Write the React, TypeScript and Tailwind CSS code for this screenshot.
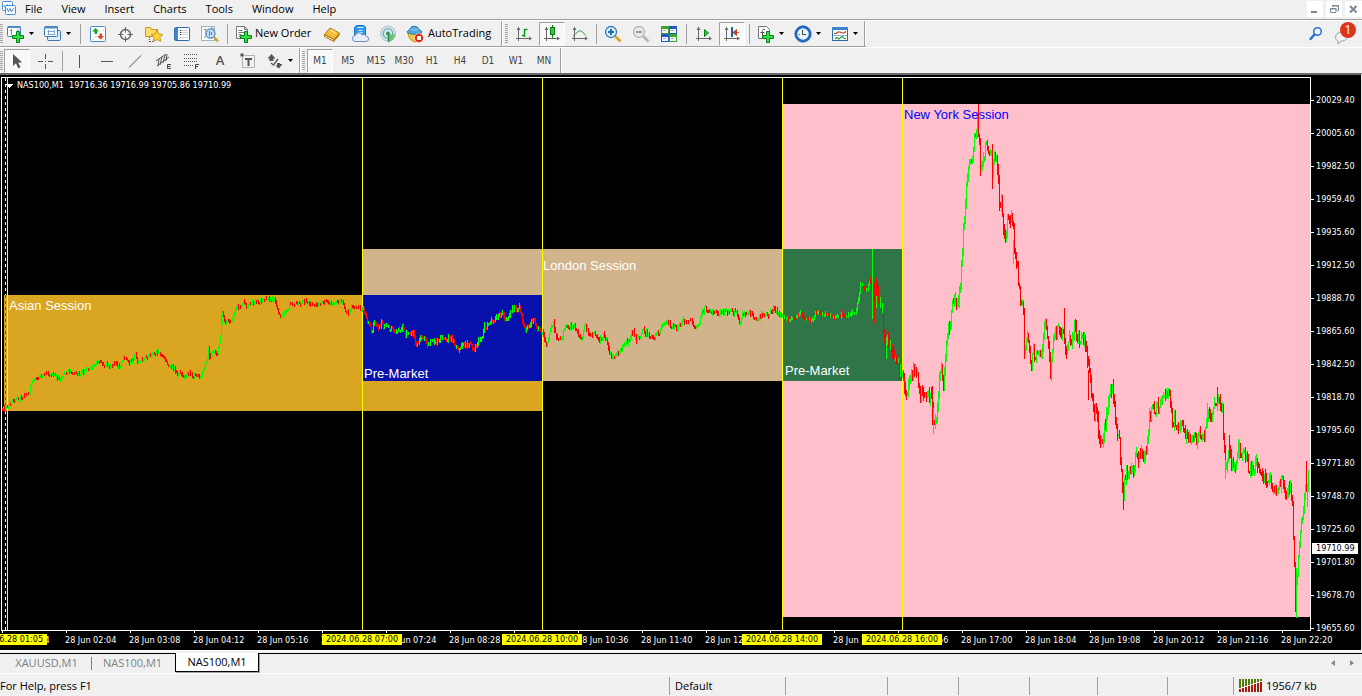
import React from "react";

const ui = "font-['Open_Sans','Noto_Sans',sans-serif]";
const axisFont = "font-['DejaVu_Sans_Condensed','DejaVu_Sans',sans-serif] text-[9px]";

/* ---------- chart data ---------- */

// Trace of the price: x position of the bar and its middle height.
const trace: [number, number][] = [
  [2, 409], [5, 408], [8, 405], [12, 400], [15, 399], [19, 400], [24, 395], [28, 393], [30, 388], [32, 380], [36, 378], [40, 377], [48, 373], [54, 375], [60, 380], [63, 374], [70, 372], [80, 374], [86, 369], [92, 366], [97, 362], [103, 364], [110, 367], [113, 363], [120, 366], [123, 358], [130, 363], [135, 355], [137, 363], [145, 358], [150, 354], [155, 352], [160, 354], [165, 359], [168, 366], [173, 368], [177, 374], [180, 371], [183, 378], [188, 373], [195, 376], [202, 374], [205, 366], [208, 352], [210, 356], [214, 350], [217, 355], [219, 342], [221, 325], [222, 312], [224, 322], [232, 320], [236, 306], [240, 309], [243, 300], [246, 307], [252, 302], [258, 302], [265, 299], [273, 299], [277, 308], [280, 317], [284, 313], [290, 304], [300, 304], [305, 301], [312, 304], [317, 305], [325, 301], [333, 304], [341, 302], [345, 310], [348, 314], [352, 306], [357, 309], [361, 308],
  [363, 309], [366, 317], [371, 331], [374, 322], [377, 328], [381, 324], [386, 327], [392, 328], [396, 332], [402, 327], [405, 335], [410, 333], [413, 333], [416, 345], [421, 337], [427, 343], [434, 342], [440, 338], [447, 340], [450, 337], [455, 345], [459, 349], [464, 345], [470, 344], [473, 350], [478, 341], [481, 339], [484, 326], [488, 325], [491, 319], [494, 321], [498, 314], [501, 314], [503, 317], [508, 317], [510, 310], [515, 309], [519, 308], [522, 320], [525, 330], [529, 325], [533, 320], [537, 330], [541, 332],
  [543, 336], [546, 343], [549, 333], [553, 323], [556, 337], [561, 341], [564, 328], [568, 327], [574, 325], [577, 332], [582, 339], [584, 325], [588, 332], [592, 337], [594, 332], [598, 341], [602, 336], [606, 338], [608, 348], [611, 356], [614, 357], [617, 353], [620, 350], [624, 343], [629, 341], [631, 331], [633, 332], [636, 340], [643, 330], [647, 335], [653, 337], [658, 335], [662, 325], [667, 320], [670, 326], [677, 328], [683, 321], [690, 321], [695, 327], [699, 325], [702, 311], [705, 308], [708, 313], [713, 312], [718, 314], [724, 312], [730, 311], [737, 314], [739, 325], [742, 315], [747, 312], [752, 314], [757, 320], [762, 315], [768, 315], [773, 310], [778, 312], [781, 317],
  [784, 318], [790, 320], [795, 317], [800, 312], [805, 320], [811, 321], [815, 313], [820, 313], [830, 316], [837, 316], [843, 313], [846, 317], [851, 312], [855, 313], [858, 298], [860, 284], [863, 287], [865, 291], [868, 286], [871, 279], [874, 300], [875, 300], [876, 284], [878, 298], [880, 300], [882, 310], [883, 332], [885, 350], [887, 338], [890, 343], [893, 352], [896, 358], [899, 372], [902, 375], [904, 388], [906, 394], [908, 388], [910, 376], [914, 369], [917, 373], [919, 395], [921, 392], [925, 393], [929, 399], [931, 392], [932, 405], [933, 420], [936, 421], [937, 405], [939, 374], [941, 366], [943, 383], [945, 352], [947, 334], [949, 330], [951, 312], [952, 300], [954, 302], [956, 303], [958, 300], [960, 288], [961, 265], [963, 233],
  [965, 200], [966, 185], [968, 165], [970, 163], [972, 155], [974, 140], [976, 131], [977, 122], [979, 142], [980, 163], [982, 160], [984, 158], [985, 148], [987, 144], [989, 150], [990, 153], [991, 150], [992, 175], [994, 160], [996, 153], [997, 165], [999, 201], [1001, 201], [1003, 225], [1004, 240], [1005, 238], [1007, 218], [1009, 218], [1011, 222], [1013, 225], [1014, 248], [1016, 262], [1018, 280], [1020, 305], [1021, 308], [1022, 302], [1023, 318], [1024, 348], [1026, 338], [1028, 340], [1031, 366], [1033, 350], [1036, 356], [1040, 355], [1042, 345], [1045, 322], [1048, 340], [1050, 370], [1051, 360], [1054, 333], [1057, 328], [1061, 337], [1063, 327], [1065, 352], [1068, 342], [1072, 338], [1074, 325], [1077, 336], [1081, 340], [1084, 335], [1086, 350], [1089, 370], [1091, 395], [1093, 412], [1096, 412], [1098, 430], [1100, 445],
  [1103, 435], [1106, 415], [1109, 391], [1112, 388], [1114, 402], [1116, 430], [1119, 442], [1121, 475], [1123, 498], [1124, 482], [1126, 470], [1128, 478], [1131, 464], [1133, 469], [1136, 458], [1139, 458], [1141, 444], [1143, 456], [1146, 452], [1148, 432], [1149, 415], [1152, 410], [1155, 410], [1157, 404], [1160, 406], [1163, 398], [1166, 392], [1168, 395], [1170, 402], [1172, 424], [1174, 417], [1176, 428], [1179, 425], [1182, 425], [1185, 433], [1189, 438], [1193, 438], [1197, 438], [1202, 432], [1205, 433], [1207, 415], [1210, 418], [1213, 410], [1216, 400], [1217, 396], [1219, 400], [1222, 412], [1223, 430], [1225, 470], [1227, 462], [1229, 446], [1231, 463], [1234, 467], [1237, 457], [1239, 447], [1242, 457], [1244, 453], [1247, 465], [1250, 471], [1253, 472], [1256, 463], [1259, 468], [1262, 473], [1265, 480], [1267, 484], [1269, 477], [1271, 485], [1275, 489], [1278, 490], [1281, 480], [1283, 481], [1285, 496], [1287, 490], [1290, 487], [1292, 505], [1293, 535], [1294, 563], [1295, 592], [1297, 575], [1298, 558], [1299, 542], [1301, 525], [1303, 510], [1305, 486], [1307, 488], [1308, 478],
];

// Single bars that reach far beyond their neighbours: x, top, bottom, rising.
const spikes: [number, number, number, boolean][] = [
  [221, 307, 325, true], [209, 346, 360, false], [273, 295, 303, true], [872, 249, 319, true], [873, 255, 302, false], [874, 300, 323, false], [876, 278, 296, false],
  [932, 386, 425, false], [933, 408, 434, true], [978, 104, 135, false], [977, 116, 134, true], [980, 138, 176, false],
  [992, 154, 189, false], [1013, 240, 264, true], [1064, 308, 334, false], [1088, 370, 400, false], [1123, 484, 510, false],
  [1207, 403, 428, true], [1217, 387, 402, false], [1225, 460, 479, true], [1229, 435, 459, false], [1238, 439, 453, true], [1295, 574, 612, false],
  [1296, 568, 618, true], [1306, 461, 492, false], [1307, 483, 507, true], [1308, 470, 492, true],
];

function hash(n: number) {
  const s = Math.sin(n * 127.1 + 11.7) * 43758.5453;
  return s - Math.floor(s);
}

function makeBars() {
  const mid: number[] = [];
  for (let i = 0; i + 1 < trace.length; i++) {
    const [x0, y0] = trace[i];
    const [x1, y1] = trace[i + 1];
    for (let x = x0; x <= x1; x++) mid[x] = y0 + ((y1 - y0) * (x - x0)) / (x1 - x0);
  }
  let up = "";
  let down = "";
  for (let x = 2; x < 1309; x++) {
    const reach = x < 362 ? 4 : x < 783 ? 5 : x < 870 ? 4 : x < 1290 ? 11 : 8;
    const close = mid[x] + (hash(x) - 0.5) * reach;
    const open = mid[x - 1] === undefined ? close : mid[x - 1] + (hash(x - 1) - 0.5) * reach;
    const top = Math.round(Math.min(open, close) - hash(x + 5000) * reach * 0.6);
    const bottom = Math.max(top + 3, Math.round(Math.max(open, close) + hash(x + 9000) * reach * 0.6));
    const piece = `M${x} ${top}h1V${bottom}h-1z`;
    if (close < open) up += piece;
    else down += piece;
  }
  return { up, down };
}
const bars = makeBars();

const prices = ["20029.40", "20005.60", "19982.50", "19959.40", "19935.60", "19912.50", "19888.70", "19865.60", "19842.50", "19818.70", "19795.60", "19771.80", "19748.70", "19725.60", "19701.80", "19678.70", "19655.60"];
const times = ["28 Jun 2024", "28 Jun 02:04", "28 Jun 03:08", "28 Jun 04:12", "28 Jun 05:16", "28 Jun 06:20", "28 Jun 07:24", "28 Jun 08:28", "28 Jun 09:32", "28 Jun 10:36", "28 Jun 11:40", "28 Jun 12:44", "28 Jun 13:48", "28 Jun 14:52", "28 Jun 15:56", "28 Jun 17:00", "28 Jun 18:04", "28 Jun 19:08", "28 Jun 20:12", "28 Jun 21:16", "28 Jun 22:20"];
const marks: [number, string][] = [[7, "2024.06.28 01:05"], [362, "2024.06.28 07:00"], [542, "2024.06.28 10:00"], [782, "2024.06.28 14:00"], [902, "2024.06.28 16:00"]];

/* ---------- icons ---------- */

function Svg({ children, w = 18, h = 18 }: { children: React.ReactNode; w?: number; h?: number }) {
  return (
    <svg width={w} height={h} viewBox={`0 0 ${w} ${h}`} fill="none" aria-hidden="true" className="block shrink-0">
      {children}
    </svg>
  );
}
const Plus = () => <path d="M9.500 6.500h3v4h4v3h-4v4h-3v-4h-4v-3h4z" fill="#2fe048" stroke="#08801a" />;
const Arrow = () => <svg width="5" height="3" viewBox="0 0 5 3" aria-hidden="true" className="block shrink-0"><path d="M0 0h5L2.500 3z" fill="#000" /></svg>;

const NewChart = () => <Svg><rect x=".5" y="1.500" width="13" height="10" rx="1" fill="#fff" stroke="#4682b4" /><path d="M1 2h12.500" stroke="#4a8bc8" strokeWidth="2" /><path d="M4.500 4v6M3 5.500h2M11 4v4" stroke="#5b93c4" /><Plus /></Svg>;
const Profiles = () => <Svg><rect x="3.500" y="5.500" width="13" height="10" rx="1" fill="#dcecf8" stroke="#3d78b4" /><rect x=".5" y="1.500" width="13" height="10" rx="1" fill="#fff" stroke="#3d78b4" /><path d="M1 2.500h13" stroke="#4a8bc8" strokeWidth="2" /><path d="M3.500 6.500h7M3.500 9.500h7M4.500 5v5M10.500 5v5" stroke="#79a6d0" /></Svg>;
const Market = () => <Svg><rect x="1.500" y="1.500" width="15" height="15" rx="1" fill="#fff" stroke="#4a8bc8" /><path d="M4 14h1M6 12h1M12 13h1M14 5h1" stroke="#9bb" /><path d="M6.500 3l3.500 3.500H8V9H5.500V6.500H3z" fill="#16a32c" /><path d="M11.500 14.500L15 11h-2V8.500h-2.500V11H8z" fill="#e0481c" /></Svg>;
const Crosshair = () => <Svg><circle cx="8.500" cy="9.500" r="5" stroke="#666" strokeWidth="1.500" /><path d="M8.500 2v5.500M8.500 11.500V17M1 9.500h5.500M10.500 9.500H16" stroke="#666" /></Svg>;
const Navigator = () => <Svg><path d="M.5 2.500h5l1 2h6v7H.5z" fill="#fbdc6c" stroke="#c99a22" /><path d="M4.500 12v5M5 16.500h3" stroke="#555" strokeDasharray="1 1" /><path d="M12 5l1.900 3.900 4 .6-2.900 2.900.7 4.100L12 14.600 8.300 16.500l.7-4.100L6 9.500l4-.6z" fill="#fdd33c" stroke="#b8860b" strokeWidth=".8" /></Svg>;
const DataWin = () => <Svg><rect x="1.500" y="2.500" width="15" height="13" rx="1" fill="#fff" stroke="#2c6cb0" /><rect x="2" y="3" width="3" height="12" fill="#3f86cc" /><path d="M7 5.500h8M7 7.500h8M7 9.500h8M7 12.500h8" stroke="#c5d5e6" /><path d="M7 5.500h1M7 7.500h1M7 9.500h1" stroke="#111" /></Svg>;
const Tester = () => <Svg><rect x=".5" y="1.500" width="13" height="14" fill="#f8fafc" stroke="#a0b4c8" /><path d="M3 4.500h2v6M10 3h2v4M4 13v-2" stroke="#9a8c60" /><circle cx="9.500" cy="8.500" r="4.500" fill="#b7dcf8" fillOpacity=".85" stroke="#5d93c8" strokeWidth="1.300" /><path d="M8.500 6v5M10.500 7v3" stroke="#4a7fae" /><path d="M13 12l4 4.500" stroke="#d9a326" strokeWidth="2.500" /></Svg>;
const OrderIcon = () => <Svg><path d="M1.500 1.500h8l3 3v9h-11z" fill="#fff" stroke="#777" /><path d="M9.500 1v3.500h3" stroke="#777" /><path d="M3.500 5.500h4M3.500 7.500h6M3.500 9.500h3M3.500 11.500h2" stroke="#777" /><Plus /></Svg>;
const Book = () => <Svg><path d="M1.500 9.500L7 3l9.500 5L11 14.500z" fill="#f3bd3c" stroke="#b37c0d" /><path d="M1.500 9.500v2L11 16.500v-2z" fill="#fff0bd" stroke="#a56e08" /><path d="M11 14.500L16.500 8v2.500L11 16.500z" fill="#b9780c" /><path d="M7.500 5l5 2.600" stroke="#fde69a" strokeWidth="1.500" /></Svg>;
const Cloud = () => <Svg><path d="M3.500 2.500l2-2h7l2 1.500V10h-11z" fill="#2f9bea" stroke="#1876c2" /><path d="M6.500 2.500h6M7.500 5.500h4M7.500 7.500h4" stroke="#d5eeff" /><path d="M4.500 16.500a3 3 0 01-.2-6 3.700 3.700 0 016.700-1 3.400 3.400 0 014 1.800 2.600 2.600 0 010 5.200z" fill="#e7eef8" stroke="#6c8cb8" /></Svg>;
const Signal = () => <Svg><circle cx="9" cy="8.500" r="7.500" fill="#d9e9e6" stroke="#a9c4cc" /><circle cx="9" cy="8.500" r="4.800" stroke="#6fa6cf" strokeWidth="1.300" /><path d="M9.500 9v8c4-.7 6.500-3.500 7-7.500" fill="#58b24c" fillOpacity=".65" /><circle cx="9" cy="8.500" r="2" fill="#2e9a5c" /><path d="M9.500 10v7" stroke="#24903a" strokeWidth="1.500" /></Svg>;
const Auto = () => <Svg><path d="M2 8h13c0 4-2.500 8-6 9C5 16 2 12 2 8z" fill="#f3c83c" stroke="#b98c18" /><path d="M1 7c1-2 3-2 3.500-4C5.500.7 11.500.7 12 3c.5 2 3 2 4 4-3 3-12 3-15 0z" fill="#52a9dc" stroke="#2474a8" /><path d="M5 4c2 1.400 5 1.400 7 0" stroke="#9bd6f5" /><circle cx="13" cy="13" r="4.500" fill="#dc2418" stroke="#fff" strokeWidth=".6" /><rect x="11" y="11" width="4" height="4" fill="#fff" /></Svg>;
const Axes = () => (
  <>
    <path d="M3.500 2v14M1 13.500h14" stroke="#666" />
    <path d="M1.500 5L3.500 2l2 3zM14 11.500l3 2-3 2z" fill="#666" />
  </>
);
const BarChart = () => <Svg><Axes /><path d="M9.500 4v8M9.500 4.500h3M7 10.500h3" stroke="#0a9a20" strokeWidth="1.500" /></Svg>;
const Candle = () => <Svg><Axes /><path d="M9.500 0v13" stroke="#087a18" /><rect x="7.500" y="2.500" width="4" height="7" fill="#2cd044" stroke="#087a18" /></Svg>;
const LineChart = () => <Svg><Axes /><path d="M2 11.500C6 7 9 4.500 11 6.500l4 4" stroke="#279a3a" /></Svg>;
const Zoom = ({ minus = false }: { minus?: boolean }) => (
  <Svg>
    <path d="M11 11l5.500 5.500" stroke={minus ? "#b5b5b5" : "#d9a92c"} strokeWidth="2.800" />
    <circle cx="7" cy="7" r="5.500" fill={minus ? "#e9e9e9" : "#d8f0fd"} stroke={minus ? "#b4b4b4" : "#2f7cc0"} strokeWidth="1.300" />
    <path d={minus ? "M4 7h6" : "M4 7h6M7 4v6"} stroke={minus ? "#999" : "#1f6db4"} strokeWidth="2" />
  </Svg>
);
const Tiles = () => <Svg><rect x="1" y="1" width="8" height="8" fill="#3ca52c" /><rect x="9" y="1" width="8" height="8" fill="#2259c0" /><rect x="1" y="9" width="8" height="8" fill="#2259c0" /><rect x="9" y="9" width="8" height="8" fill="#3ca52c" /><path d="M2 4h6v4H2zM10 4h6v4h-6zM2 12h6v4H2zM10 12h6v4h-6z" fill="#f2f7fb" /><path d="M3 5.500h3M11 5.500h3M3 13.500h3M11 13.500h3" stroke="#aac" /></Svg>;
const Scroll = () => <Svg><Axes /><path d="M9.500 4.500l4 3.500-4 3.500z" fill="#35c84c" stroke="#08801a" /></Svg>;
const Shift = () => <Svg><Axes /><path d="M9 2v10" stroke="#1b5fa8" strokeWidth="2" /><path d="M16 7.500h-3M13.500 4.500v6l-3.500-3z" fill="#d0421a" stroke="#b83410" strokeWidth=".8" /></Svg>;
const Indicators = () => <Svg><path d="M1.500 1.500h8l3 3v9h-11z" fill="#fff" stroke="#777" /><path d="M8 4.500c-2-1-2.500.5-2.500 2v5M3.500 7.500h4" stroke="#555" /><Plus /></Svg>;
const Clock = () => <Svg><circle cx="9" cy="9" r="7" fill="#e9f3fb" stroke="#1e6cc4" strokeWidth="2.500" /><circle cx="9" cy="9" r="8.200" stroke="#0f4f9c" strokeWidth=".6" /><path d="M8.500 5v4.500H12M5 9.500h1" stroke="#444" /></Svg>;
const Template = () => <Svg><rect x="1.500" y="2.500" width="15" height="13" fill="#fff" stroke="#2f6ca8" /><path d="M1 3.500h16" stroke="#3a84cc" strokeWidth="3" /><path d="M2 10.500h14" stroke="#8fb0d0" /><path d="M3 8.500h2l2-1.500h2l2 1h2l2-1.500" stroke="#b03818" strokeWidth="1.200" /><path d="M4 14l2-1.500 2 1.500 3-2.500L13 13l2 1" stroke="#269a38" strokeWidth="1.200" /></Svg>;

const Pointer = () => <Svg><path d="M5 2v12l3-2.700 2.200 5 2.300-1-2.300-4.800h4z" fill="#555" /></Svg>;
const Cross = () => <Svg><path d="M9.500 2v5M9.500 12v5M2 9.500h5M12 9.500h5M9 9.500h1" stroke="#555" /></Svg>;
const VLine = () => <Svg><path d="M8.500 3v13" stroke="#555" /></Svg>;
const HLine = () => <Svg><path d="M2 9.500h12" stroke="#555" /></Svg>;
const Trend = () => <Svg><path d="M2 15.500L14 3.500" stroke="#555" /></Svg>;
const Equi = () => <Svg><path d="M1 9L11 2M2 14L14 5M4 7l-1 7M7 5L5 13M10 3L8 11M12 2l-1 7" stroke="#555" /><path d="M16 12.500h-3.500v4H16M12.500 14.500h3" stroke="#444" /></Svg>;
const Fibo = () => <Svg><path d="M1 2.500h14M1 6.500h14M1 9.500h14M1 13.500h9" stroke="#555" strokeDasharray="1 1" /><path d="M16 12.500h-3.500V17M12.500 14.500H15" stroke="#444" /></Svg>;
const LabelTool = () => <Svg><path d="M3.500 3.500h12v12h-12z" stroke="#777" strokeDasharray="1 1" /><path d="M1.500 1.500h3v3h-3z" fill="#555" /><path d="M6 7h7M9.500 6.500V14" stroke="#555" strokeWidth="2" /></Svg>;
const Arrows = () => <Svg><path d="M1.500 6.500l4-4.500 4 4.500H7.500V9h-4V6.500zM16.500 12l-3.500 4.500L9 13.500h2V11h3v1z" fill="#555" /><path d="M5 11l2.500 2L12 7" stroke="#555" strokeWidth="1.300" /></Svg>;

/* ---------- toolbar parts ---------- */

function Tool({ label, children, pressed = false }: { label: string; children: React.ReactNode; pressed?: boolean }) {
  return (
    <button
      type="button"
      aria-label={label}
      aria-pressed={pressed || undefined}
      className={pressed ? "mx-px flex h-6 w-[26px] shrink-0 items-center justify-center border border-t-[#a0a0a0] border-r-white border-b-white border-l-[#a0a0a0] bg-[#f8f8f8]" : "flex h-6 w-7 shrink-0 items-center justify-center"}
    >
      {children}
    </button>
  );
}
const DropTool = ({ label, children }: { label: string; children: React.ReactNode }) => (
  <button type="button" aria-label={label} className="flex h-6 w-[37px] shrink-0 items-center gap-1 pl-1">{children}<Arrow /></button>
);
const Sep = ({ className = "mx-[3px]" }: { className?: string }) => <span className={`${className} h-5 w-px shrink-0 bg-[#a0a0a0]`} />;
const Grip = ({ className = "" }: { className?: string }) => <span className={`${className} h-5 w-[3px] shrink-0 bg-[repeating-linear-gradient(#a5a5a5_0_1px,#f0f0f0_1px_2px)]`} />;
const End = () => <span className="h-full w-0.5 shrink-0 border-l border-[#a0a0a0] bg-white" />;

const frames = ["M1", "M5", "M15", "M30", "H1", "H4", "D1", "W1", "MN"];

/* ---------- page parts ---------- */

function MenuBar() {
  return (
    <header className="flex h-5 items-start border-b border-[#a0a0a0]">
      <Svg w={18} h={17}>
        <rect x="2.500" y="1.500" width="10" height="9" rx="1" fill="#fff" stroke="#3d8ee0" />
        <path d="M4 5l1.500 3L7 4.500 8.500 7" stroke="#3d8ee0" />
        <rect x="5.500" y="5.500" width="10" height="9" rx="1" fill="#fff" stroke="#3d8ee0" />
        <path d="M7 8l1.500 4L10 8.500l1.500 3.500 2-4" stroke="#3d8ee0" />
      </Svg>
      <nav className="flex flex-1 gap-[19px] pl-[7px] text-[11px] leading-[18px] text-black">
        {["File", "View", "Insert", "Charts", "Tools", "Window", "Help"].map((m) => <button type="button" key={m}>{m}</button>)}
      </nav>
      <div className="flex gap-[3px] pt-px">
        <button type="button" aria-label="Minimize" className="bg-white"><Svg w={16} h={16}><path d="M4 11h6" stroke="#7a8794" strokeWidth="2" /></Svg></button>
        <button type="button" aria-label="Restore" className="bg-white"><Svg w={16} h={16}><path d="M6.500 6V4.500h6v5H11M6 5h7M4 8h6.500M4.500 7.500h5.500v4H4.500z" stroke="#7a8794" /></Svg></button>
        <button type="button" aria-label="Close" className="bg-white"><Svg w={17} h={16}><path d="M5 5l6.500 6.500M11.500 5L5 11.500" stroke="#7a8794" strokeWidth="2" /></Svg></button>
      </div>
    </header>
  );
}

function MainToolbar() {
  return (
    <div className="flex h-[27px] items-center border-t border-white">
      <div className="flex h-full items-center border-b border-[#a0a0a0]">
        <Grip />
        <DropTool label="New chart"><NewChart /></DropTool>
        <DropTool label="Profiles"><Profiles /></DropTool>
        <Sep />
        <Tool label="Market Watch"><Market /></Tool>
        <Tool label="Data Window"><Crosshair /></Tool>
        <Tool label="Navigator"><Navigator /></Tool>
        <Tool label="Terminal"><DataWin /></Tool>
        <Tool label="Strategy Tester"><Tester /></Tool>
        <Sep />
        <button type="button" className="flex h-6 w-[87px] items-center gap-0.5 pl-1 text-[11px] whitespace-nowrap"><OrderIcon /><span>New Order</span></button>
        <Tool label="MetaEditor"><Book /></Tool>
        <Tool label="Cloud"><Cloud /></Tool>
        <Tool label="Signals"><Signal /></Tool>
        <button type="button" className="flex h-6 w-[99px] items-center gap-1 pl-1 text-[11px] whitespace-nowrap"><Auto /><span>AutoTrading</span></button>
        <End />
        <Grip className="mx-0.5" />
        <Tool label="Bar chart"><BarChart /></Tool>
        <Tool label="Candlesticks" pressed><Candle /></Tool>
        <Tool label="Line chart"><LineChart /></Tool>
        <Sep className="mx-0.5" />
        <Tool label="Zoom in"><Zoom /></Tool>
        <Tool label="Zoom out"><Zoom minus /></Tool>
        <Tool label="Tile windows"><Tiles /></Tool>
        <Sep />
        <Tool label="Auto scroll"><Scroll /></Tool>
        <Tool label="Chart shift" pressed><Shift /></Tool>
        <Sep />
        <DropTool label="Indicators"><Indicators /></DropTool>
        <DropTool label="Periods"><Clock /></DropTool>
        <DropTool label="Templates"><Template /></DropTool>
        <End />
      </div>
      <div className="flex h-full flex-1 items-center justify-end gap-2.5">
        <button type="button" aria-label="Search"><Svg w={16} h={16}><circle cx="9.500" cy="5.500" r="3.800" fill="#eef6ff" stroke="#2f6fd0" strokeWidth="1.500" /><path d="M6.500 8.500L2.500 13" stroke="#2f6fd0" strokeWidth="2.500" strokeLinecap="round" /></Svg></button>
        <button type="button" aria-label="Messages" className="relative h-6 w-7">
          <svg width="20" height="16" viewBox="0 0 20 16" aria-hidden="true" className="absolute top-[7px] left-0"><path d="M4 12c-3-1-3.500-6 0-8 3-1.500 8-1 9 2 1 4-2 6-6 6l-3 3z" fill="#f2f2f6" stroke="#a0a0a4" /></svg>
          <span className="absolute top-0 left-1.5 flex size-4 items-center justify-center rounded-full bg-[#dd3420] text-[12px] text-white">1</span>
        </button>
      </div>
    </div>
  );
}

function DrawToolbar() {
  return (
    <div className="flex h-[26px] items-center border-t border-white">
      <Grip />
      <Tool label="Cursor" pressed><Pointer /></Tool>
      <Tool label="Crosshair"><Cross /></Tool>
      <Sep />
      <Tool label="Vertical line"><VLine /></Tool>
      <Tool label="Horizontal line"><HLine /></Tool>
      <Tool label="Trendline"><Trend /></Tool>
      <Tool label="Equidistant channel"><Equi /></Tool>
      <Tool label="Fibonacci"><Fibo /></Tool>
      <button type="button" className="h-6 w-7 text-[13px] font-semibold text-[#555]">A</button>
      <Tool label="Text label"><LabelTool /></Tool>
      <DropTool label="Arrows"><Arrows /></DropTool>
      <End />
      <Grip className="mx-px" />
      <div className="flex pr-0.5 font-['DejaVu_Sans_Condensed','DejaVu_Sans',sans-serif] text-[10px] text-[#444]">
        {frames.map((f) => (
          <button
            type="button"
            key={f}
            className={f === "M1"
              ? "mx-px h-6 w-[26px] border border-t-[#a0a0a0] border-r-white border-b-white border-l-[#a0a0a0] bg-[#f8f8f8]"
              : "h-6 w-7"}
          >
            {f}
          </button>
        ))}
      </div>
      <End />
    </div>
  );
}

function Plot() {
  return (
    <div className="relative mt-0.5 ml-px flex-1 overflow-hidden border border-white">
      <svg className="absolute inset-0 size-full" shapeRendering="crispEdges" role="img" aria-label="NAS100 one minute chart">
        <g transform="translate(-2 -78)">
          <rect x="783" y="104" width="530" height="513" fill="#ffc0cb" />
          <rect x="4" y="295" width="539" height="116" fill="#daa520" />
          <rect x="363" y="249" width="420" height="132" fill="#d2b48c" />
          <rect x="363" y="295" width="180" height="86" fill="#0811ab" />
          <rect x="783" y="249" width="120" height="132" fill="#2f7548" />
          <path d="M5.500 78V295M5.500 411V630" stroke="#fff" strokeDasharray="3 3" />
          <path d="M5.500 295V411" stroke="#2558c8" strokeDasharray="3 3" />
          {marks.map(([x]) => <rect key={x} x={x} y="77" width="1" height="554" fill="#ff0" />)}
          <path d={bars.up} fill="#0f0" />
          <path d={bars.down} fill="#f00" />
          {spikes.map(([x, t, b, rise]) => <rect key={`${x}-${t}`} x={x} y={t} width="1" height={b - t} fill={rise ? "#0f0" : "#f00"} />)}
          <path d="M5 84h8l-4 4z" fill="#fff" />
        </g>
      </svg>
      <p className="relative pl-[15px] font-['DejaVu_Sans_Condensed','DejaVu_Sans',sans-serif] text-[9px] leading-[15px] whitespace-pre text-white">NAS100,M1  19716.36 19716.99 19705.86 19710.99</p>
      <div className="font-['Liberation_Sans',Arial,sans-serif] text-[13px] leading-4 text-white">
        <span className="absolute top-[220px] left-[7px]">Asian Session</span>
        <span className="absolute top-[288px] left-[362px]">Pre-Market</span>
        <span className="absolute top-[180px] left-[541px]">London Session</span>
        <span className="absolute top-[285px] left-[783px]">Pre-Market</span>
        <span className="absolute top-[29px] left-[902px] text-[#0000ff]">New York Session</span>
      </div>
    </div>
  );
}

function Chart() {
  return (
    <main className={`flex border-t-2 border-r border-b border-t-[#696969] border-r-[#e3e3e3] border-b-white bg-black text-white ${axisFont}`}>
      <div className="flex min-w-0 flex-1 flex-col">
        <Plot />
        <div className="relative h-[19px] pl-px">
          <div className="flex">
            {times.map((t) => (
              <div key={t} className="w-16 shrink-0 whitespace-nowrap">
                <div className="ml-px h-0.5 w-px bg-white" />
                <div className="leading-[14px]">{t}</div>
              </div>
            ))}
          </div>
          <div className="absolute inset-x-0 top-[3px] h-[11px] [clip-path:inset(0)]">
            {marks.map(([x, t]) => (
              <span key={t} className="absolute top-0 flex h-[11px] w-20 items-center justify-center bg-[#ffff00] leading-[11px] whitespace-nowrap text-black" style={{ left: x - 40 }}>{t}</span>
            ))}
          </div>
        </div>
      </div>
      <div className="relative w-[50px] pt-[9px] pb-[5px]">
        {prices.map((p) => (
          <div key={p} className="flex h-[33px] items-center gap-0.5">
            <span className="h-px w-[3px] bg-white" />
            <span>{p}</span>
          </div>
        ))}
        <span className="absolute top-[468px] left-px flex h-[11px] w-[46px] items-center bg-white pl-1 text-black">19710.99</span>
      </div>
    </main>
  );
}

function ChartTabs() {
  return (
    <div className="mt-0.5 flex h-5 items-start border-t border-black text-[11px] leading-[18px] text-[#808080]">
      <button type="button" className="w-[91px] pl-0.5">XAUUSD,M1</button>
      <span className="mt-[3px] h-[13px] w-px bg-[#808080]" />
      <button type="button" className="w-[83px] pr-0.5">NAS100,M1</button>
      <button type="button" aria-current="page" className="-mt-px w-[84px] border-x border-b border-black bg-white text-black shadow-[1px_1px_0_#a0a0a0]">NAS100,M1</button>
      <div className="flex flex-1 justify-end gap-[15px] pt-1.5 pr-2">
        <button type="button" aria-label="Scroll tabs left"><Svg w={4} h={6}><path d="M4 0v6L0 3z" fill="#888" /></Svg></button>
        <button type="button" aria-label="Scroll tabs right"><Svg w={4} h={6}><path d="M0 0v6l4-3z" fill="#888" /></Svg></button>
      </div>
    </div>
  );
}

function StatusBar() {
  const cell = "h-[18px] shrink-0 border-l border-[#a0a0a0]";
  return (
    <footer className="flex h-[23px] items-center border-t border-white pt-px text-[11px] leading-[18px] text-black">
      <span className="flex-1">For Help, press F1</span>
      <span className={`${cell} w-[116px] pl-[5px]`}>Default</span>
      <span className={`${cell} w-[102px]`} />
      <span className={`${cell} w-[71px]`} />
      <span className={`${cell} w-[71px]`} />
      <span className={`${cell} w-[68px]`} />
      <span className={`${cell} w-[70px]`} />
      <span className={`${cell} w-[66px]`} />
      <span className={`${cell} flex w-[129px] items-center gap-[3px] pl-[5px]`}>
        <svg width="24" height="14" viewBox="0 0 24 14" shapeRendering="crispEdges" aria-hidden="true">
          {[0, 1, 2, 3, 4, 5, 6, 7].map((i) => (
            <g key={i}>
              <rect x={i * 3} y="0" width="2" height={9 - i} fill="#4f7a0c" />
              <rect x={i * 3} y={10 - i} width="2" height={3 + i} fill="#a01c0c" />
            </g>
          ))}
        </svg>
        1956/7 kb
      </span>
    </footer>
  );
}

export default function App() {
  return (
    <div className={`flex min-h-screen flex-col overflow-hidden bg-[#f0f0f0] ${ui}`}>
      <MenuBar />
      <MainToolbar />
      <DrawToolbar />
      <Chart />
      <ChartTabs />
      <StatusBar />
    </div>
  );
}
